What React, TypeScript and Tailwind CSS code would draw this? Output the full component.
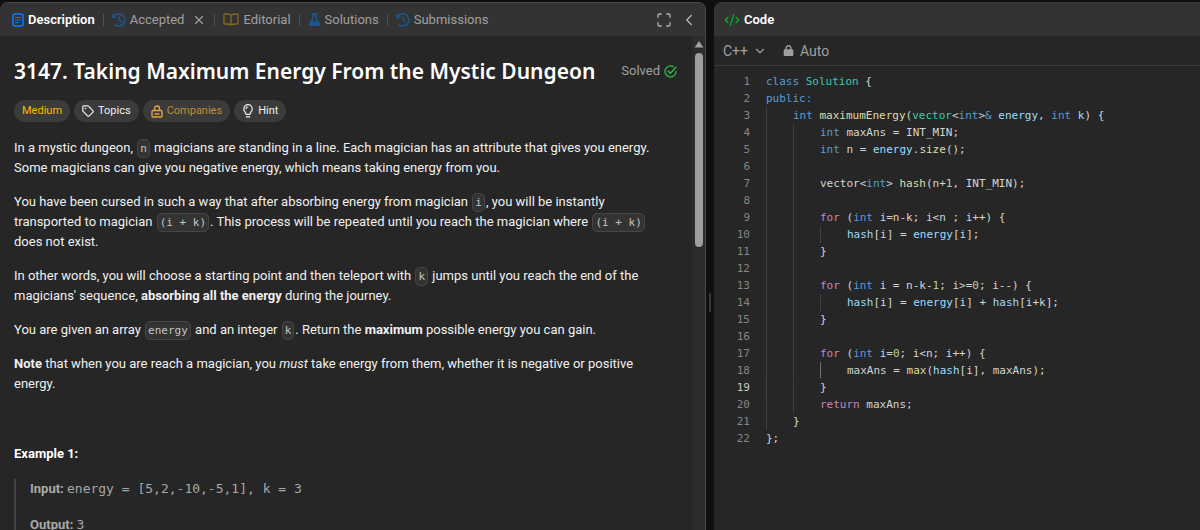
import type { ReactNode } from 'react';
import clsx from 'clsx';
import { ChevronDown, ChevronLeft, CodeXml, Maximize, X } from 'lucide-react';
import { FaFlask, FaLock } from 'react-icons/fa6';

interface IconProps {
    className?: string;
}

const NoteIcon = ({ className }: IconProps) => (
    <svg viewBox="0 0 12 14" className={className} fill="none" stroke="currentColor" strokeLinecap="round">
        <rect x="1" y="1" width="10" height="12" rx="2" strokeWidth="1.5" />
        <path d="M3.5 4.5h5M3.5 7h5M3.5 9.5h2.5" strokeWidth="1.2" />
    </svg>
);

const HistoryIcon = ({ className }: IconProps) => (
    <svg viewBox="0 0 14 14" className={className} fill="none" stroke="currentColor" strokeWidth="1.5" strokeLinecap="round" strokeLinejoin="round">
        <path d="M1 1.2v3.4h3.4" />
        <path d="M1.4 4.3A6 6 0 1 1 3.4 11.8" />
        <path d="M7.4 4v3.2l2 1.6" />
    </svg>
);

const BookIcon = ({ className }: IconProps) => (
    <svg viewBox="0 0 16 13" className={className} fill="none" stroke="currentColor" strokeWidth="1.4" strokeLinejoin="round">
        <path d="M8 2.2C6.8 1.2 5.2 1 3.2 1H1.8C1.2 1 1 1.3 1 1.8v8.4c0 .5.3.8.8.8H3.5c2 0 3.5.2 4.5 1 1-.8 2.5-1 4.5-1h1.7c.5 0 .8-.3.8-.8V1.8c0-.5-.2-.8-.8-.8h-1.4C10.8 1 9.2 1.2 8 2.2z" />
        <path d="M8 2.2V12" />
    </svg>
);

const TagIcon = ({ className }: IconProps) => (
    <svg viewBox="0 0 12 12" className={className} fill="none" stroke="currentColor" strokeWidth="1.2" strokeLinejoin="round">
        <path d="M.8 1.8v3.6c0 .4.1.7.4 1l4.4 4.4c.5.5 1.2.5 1.7 0l3.5-3.5c.5-.5.5-1.2 0-1.7L6.4 1.2c-.3-.3-.6-.4-1-.4H1.8c-.6 0-1 .4-1 1z" />
        <circle cx="3.5" cy="3.5" r=".8" fill="currentColor" stroke="none" />
    </svg>
);

const PadlockIcon = ({ className }: IconProps) => (
    <svg viewBox="0 0 12 13" className={className} fill="none" stroke="currentColor" strokeWidth="1.4" strokeLinecap="round" strokeLinejoin="round">
        <rect x="1" y="5.5" width="10" height="6.5" rx="1" />
        <path d="M3.5 5.5V3.5a2.5 2.5 0 0 1 5 0v2M4 9h4" />
    </svg>
);

const BulbIcon = ({ className }: IconProps) => (
    <svg viewBox="0 0 10 14" className={className} fill="none" stroke="currentColor" strokeWidth="1.2" strokeLinecap="round" strokeLinejoin="round">
        <path d="M3 10.3C3 8.5.8 7.6.8 4.9a4.2 4.2 0 0 1 8.4 0C9.2 7.6 7 8.5 7 10.3zM3.2 12.8h3.6M3 4.8c0-1 .8-1.8 1.8-1.8" />
    </svg>
);

const SolvedIcon = ({ className }: IconProps) => (
    <svg viewBox="0 0 13 13" className={className} fill="none" stroke="currentColor" strokeWidth="1.3" strokeLinecap="round" strokeLinejoin="round">
        <path d="M9.2 1.6A5.5 5.5 0 1 0 12 6.3" />
        <path d="M4 6l2.3 2.3L12 2.3" />
    </svg>
);

const Separator = () => <span className="h-3 w-px shrink-0 bg-[#505050]" />;

interface TabProps {
    icon: ReactNode;
    label: string;
    active?: boolean;
}

const Tab = ({ icon, label, active }: TabProps) => (
    <button className={clsx('flex items-center gap-1 whitespace-nowrap', active ? 'font-semibold text-white' : 'text-[#a0a0a0]')}>
        {icon}
        {label}
    </button>
);

interface PillProps {
    icon?: ReactNode;
    label: string;
    className?: string;
}

const Pill = ({ icon, label, className }: PillProps) => (
    <button className={clsx('flex h-[22px] items-center gap-1 rounded-full bg-[#3b3b3b] text-[11px]', className)}>
        {icon}
        {label}
    </button>
);

const Code = ({ children }: { children: ReactNode }) => (
    <code className="mx-px rounded-[5px] border border-[#464646] bg-[#333333] px-[2px] py-[2px] font-['DejaVu_Sans_Mono',monospace] text-[11px] leading-none whitespace-nowrap text-[#c4c4c4]">
        {children}
    </code>
);

const Description = () => (
    <article className="min-w-0 flex-1 overflow-hidden pt-[21px] pr-[15px] pl-[14px] text-[13px] leading-5 text-[#f0f0f0]">
        <div className="flex items-center justify-between">
            <h1 className="font-['Noto_Sans',sans-serif] text-[21px] leading-7 font-semibold whitespace-nowrap text-white">
                3147. Taking Maximum Energy From the Mystic Dungeon
            </h1>
            <span className="flex items-center gap-1 text-[#a0a0a0]">
                Solved
                <SolvedIcon className="size-[13px] text-[#28c244]" />
            </span>
        </div>
        <div className="mt-[15px] flex gap-1">
            <Pill label="Medium" className="px-2 text-[#ffb800]" />
            <Pill label="Topics" className="px-2 text-[#f0f0f0]" icon={<TagIcon className="size-3" />} />
            <Pill label="Companies" className="px-2 text-[#c08c35]" icon={<PadlockIcon className="h-[13px] w-3 text-[#e3a43c]" />} />
            <Pill label="Hint" className="px-2 text-[#f0f0f0]" icon={<BulbIcon className="h-[14px] w-3" />} />
        </div>
        <div className="mt-4 space-y-[14px] pr-5">
            <p>
                In a mystic dungeon, <Code>n</Code> magicians are standing in a line. Each magician has an attribute that
                gives you energy. Some magicians can give you negative energy, which means taking energy from you.
            </p>
            <p>
                You have been cursed in such a way that after absorbing energy from magician <Code>i</Code>, you will be
                instantly transported to magician <Code>(i + k)</Code>. This process will be repeated until you reach the
                magician where <Code>(i + k)</Code> does not exist.
            </p>
            <p>
                In other words, you will choose a starting point and then teleport with <Code>k</Code> jumps until you
                reach the end of the magicians' sequence, <strong>absorbing all the energy</strong> during the journey.
            </p>
            <p>
                You are given an array <Code>energy</Code> and an integer <Code>k</Code>. Return the{' '}
                <strong>maximum</strong> possible energy you can gain.
            </p>
            <p>
                <strong>Note</strong> that when you are reach a magician, you <em>must</em> take energy from them, whether
                it is negative or positive energy.
            </p>
        </div>
        <h2 className="mt-[50px] font-bold text-white">Example 1:</h2>
        <div className="mt-[15px] space-y-4 border-l-2 border-[#424242] pl-[14px] text-[#a8a8a8]">
            <p>
                <strong>Input:</strong>{' '}
                <span className="font-['DejaVu_Sans_Mono',monospace] leading-none">energy = [5,2,-10,-5,1], k = 3</span>
            </p>
            <p>
                <strong>Output:</strong>{' '}
                <span className="font-['DejaVu_Sans_Mono',monospace] leading-none">3</span>
            </p>
        </div>
    </article>
);

const colors = {
    k: 'text-[#569cd6]',
    t: 'text-[#3dc9b0]',
    f: 'text-[#dcdcaa]',
    v: 'text-[#9cdcfe]',
    c: 'text-[#c586c0]',
    n: 'text-[#b5cea8]',
    p: 'text-[#d4d4d4]',
};

type Token = [keyof typeof colors, string];

interface Line {
    indent: number;
    tokens: Token[];
}

const lines: Line[] = [
    { indent: 0, tokens: [['k', 'class '], ['t', 'Solution '], ['p', '{']] },
    { indent: 0, tokens: [['k', 'public:']] },
    { indent: 1, tokens: [['k', 'int '], ['f', 'maximumEnergy'], ['p', '('], ['t', 'vector'], ['p', '<'], ['k', 'int'], ['p', '>'], ['k', '& '], ['v', 'energy'], ['p', ', '], ['k', 'int '], ['v', 'k'], ['p', ') {']] },
    { indent: 2, tokens: [['k', 'int '], ['p', 'maxAns = INT_MIN;']] },
    { indent: 2, tokens: [['k', 'int '], ['p', 'n = '], ['v', 'energy'], ['p', '.'], ['f', 'size'], ['p', '();']] },
    { indent: 2, tokens: [] },
    { indent: 2, tokens: [['p', 'vector<'], ['k', 'int'], ['p', '> '], ['f', 'hash'], ['p', '(n+'], ['n', '1'], ['p', ', INT_MIN);']] },
    { indent: 2, tokens: [] },
    { indent: 2, tokens: [['c', 'for '], ['p', '('], ['k', 'int '], ['p', 'i=n-k; i<n ; i++) {']] },
    { indent: 3, tokens: [['v', 'hash'], ['p', '[i] = '], ['v', 'energy'], ['p', '[i];']] },
    { indent: 2, tokens: [['p', '}']] },
    { indent: 2, tokens: [] },
    { indent: 2, tokens: [['c', 'for '], ['p', '('], ['k', 'int '], ['p', 'i = n-k-'], ['n', '1'], ['p', '; i>='], ['n', '0'], ['p', '; i--) {']] },
    { indent: 3, tokens: [['v', 'hash'], ['p', '[i] = '], ['v', 'energy'], ['p', '[i] + '], ['v', 'hash'], ['p', '[i+k];']] },
    { indent: 2, tokens: [['p', '}']] },
    { indent: 2, tokens: [] },
    { indent: 2, tokens: [['c', 'for '], ['p', '('], ['k', 'int '], ['p', 'i='], ['n', '0'], ['p', '; i<n; i++) {']] },
    { indent: 3, tokens: [['p', 'maxAns = '], ['f', 'max'], ['p', '('], ['v', 'hash'], ['p', '[i], maxAns);']] },
    { indent: 2, tokens: [['p', '}']] },
    { indent: 2, tokens: [['c', 'return '], ['p', 'maxAns;']] },
    { indent: 1, tokens: [['p', '}']] },
    { indent: 0, tokens: [['p', '};']] },
];

const CURRENT_LINE = 19;

const Editor = () => (
    <div className="min-h-0 flex-1 overflow-hidden pt-[7px] font-['DejaVu_Sans_Mono',monospace] text-[11px] leading-[17px]">
        {lines.map(({ indent, tokens }, i) => {
            const current = i + 1 === CURRENT_LINE;
            return (
                <div key={i} className="flex h-[17px]">
                    <span className={clsx('mr-4 w-9 shrink-0 text-right', current ? 'text-[#c6c6c6]' : 'text-[#858585]')}>
                        {i + 1}
                    </span>
                    <div className={clsx('flex flex-1 whitespace-pre', current && 'outline outline-[#2a2a2a]')}>
                        {Array.from({ length: indent }, (_, level) => (
                            <span
                                key={level}
                                className={clsx('w-[27px] shrink-0 border-l', i === 17 && level === 2 ? 'border-[#707070]' : 'border-[#404040]')}
                            />
                        ))}
                        <code className="font-['DejaVu_Sans_Mono',monospace]">
                            {tokens.map(([kind, text], j) => (
                                <span key={j} className={colors[kind]}>
                                    {text}
                                </span>
                            ))}
                        </code>
                    </div>
                </div>
            );
        })}
    </div>
);

const App = () => {
    return (
        <div className="grid h-screen grid-cols-[706fr_8px_486fr] overflow-hidden bg-[#0f0f0f] pt-[2px] font-['Roboto',sans-serif] text-[13px]">
            <section className="flex min-h-0 min-w-0 flex-col overflow-hidden rounded-t-lg border-t border-r border-[#4a4a4a] bg-[#262626]">
                <header className="flex h-[33px] shrink-0 items-center gap-2 bg-[#333333] pr-[7px] pl-3">
                    <Tab active label="Description" icon={<NoteIcon className="h-[14px] w-3 text-[#0a7cff]" />} />
                    <Separator />
                    <Tab label="Accepted" icon={<HistoryIcon className="size-[14px] text-[#1f558f]" />} />
                    <button aria-label="Close" className="text-[#a0a0a0]">
                        <X size={14} />
                    </button>
                    <Separator />
                    <Tab label="Editorial" icon={<BookIcon className="h-[13px] w-4 text-[#85671b]" />} />
                    <Separator />
                    <Tab label="Solutions" icon={<FaFlask className="size-[13px] text-[#1f558f]" />} />
                    <Separator />
                    <Tab label="Submissions" icon={<HistoryIcon className="size-[14px] text-[#1f558f]" />} />
                    <div className="ml-auto flex items-center gap-2 text-[#b0b0b0]">
                        <button aria-label="Maximize">
                            <Maximize size={16} strokeWidth={2} />
                        </button>
                        <button aria-label="Collapse">
                            <ChevronLeft size={18} strokeWidth={2} />
                        </button>
                    </div>
                </header>
                <div className="flex min-h-0 flex-1">
                    <Description />
                    <div className="flex w-[13px] shrink-0 flex-col items-center bg-[#2c2c2c] pt-[5px]">
                        <svg viewBox="0 0 10 7" className="h-[7px] w-[10px]" fill="#9f9f9f">
                            <path d="M5 0l4.5 6.5h-9z" />
                        </svg>
                        <div className="mt-[5px] h-[194px] w-2 rounded-full bg-[#9f9f9f]" />
                    </div>
                </div>
            </section>

            <div className="flex items-center justify-center pt-[72px]">
                <div className="h-[19px] w-[2px] rounded-full bg-[#383838]" />
            </div>

            <section className="flex min-h-0 min-w-0 flex-col overflow-hidden rounded-tl-lg border-t border-[#3a3a3a] bg-[#262626]">
                <header className="flex h-[33px] shrink-0 items-center bg-[#333333] px-[10px]">
                    <Tab active label="Code" icon={<CodeXml size={16} className="text-[#02b128]" />} />
                </header>
                <div className="flex h-[30px] shrink-0 items-center gap-4 border-b border-[#3a3a3a] px-[9px] text-sm text-[#a0a0a0]">
                    <label className="flex items-center gap-[2px]">
                        <select aria-label="Language" className="w-7 appearance-none bg-transparent">
                            <option>C++</option>
                        </select>
                        <ChevronDown size={14} />
                    </label>
                    <button className="flex items-center gap-[6px]">
                        <FaLock className="size-[11px]" />
                        Auto
                    </button>
                </div>
                <Editor />
            </section>
        </div>
    );
};

export default App;
